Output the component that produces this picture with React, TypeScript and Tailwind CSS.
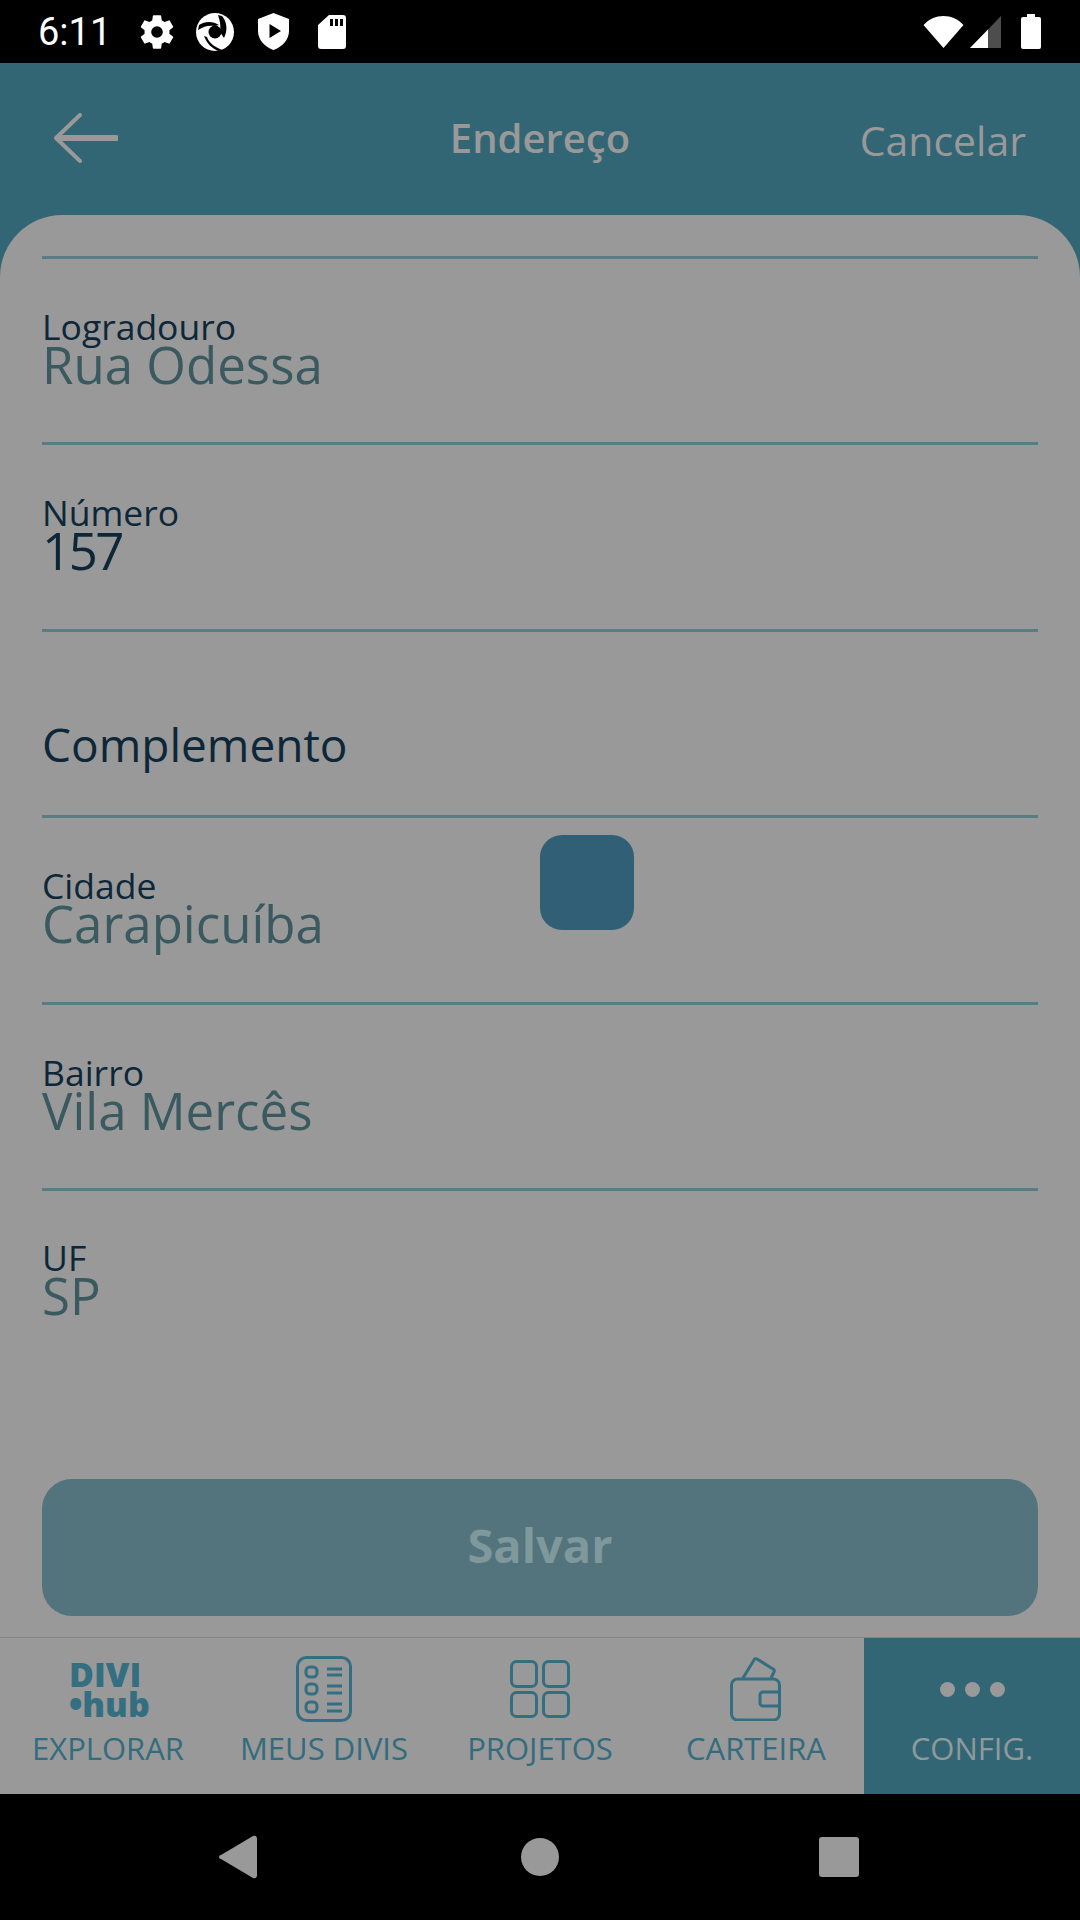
const fieldFont = "font-['Open_Sans',sans-serif]";

function Field({ label, value, dark }: { label?: string; value: string; dark?: boolean }) {
  return (
    <div className="h-[186.4px] shrink-0 border-b-[3px] border-[#5a7d83] flex flex-col pt-[49px]">
      {label ? (
        <>
          <div className="text-[35.5px] leading-[36px] text-[#0d2738]">{label}</div>
          <div className={`leading-[40px] ${dark ? 'text-[51px] font-medium tracking-[-2.5px] text-[#0d2738]' : 'text-[51px] font-medium text-[#3a5a60]'}`}>{value}</div>
        </>
      ) : (
        <div className="mt-[35px] text-[46px] leading-[56px] text-[#0d2738]">{value}</div>
      )}
    </div>
  );
}

function StatusBar() {
  return (
    <div className="h-[63px] bg-black flex items-center shrink-0 text-white pl-[38px] pr-[39px]">
      <span className="font-['Roboto',sans-serif] text-[38px] leading-none w-[99px]">6:11</span>
      <div className="flex items-center">
        <svg width="40" height="40" viewBox="0 0 24 24" fill="#fff">
          <path d="M19.4 13c.04-.32.1-.66.1-1s-.03-.68-.07-1l2.1-1.65c.2-.15.25-.42.12-.64l-2-3.46c-.12-.22-.39-.3-.61-.22l-2.49 1a7.3 7.3 0 0 0-1.69-.98l-.38-2.65A.49.49 0 0 0 14 2h-4c-.25 0-.46.18-.49.42l-.38 2.65c-.61.25-1.17.59-1.69.98l-2.49-1c-.23-.09-.49 0-.61.22l-2 3.46c-.13.22-.07.49.12.64L4.57 11c-.04.32-.07.66-.07 1s.03.68.07 1l-2.11 1.65c-.19.15-.25.42-.12.64l2 3.46c.12.22.39.3.61.22l2.49-1c.52.4 1.08.73 1.69.98l.38 2.65c.03.24.24.42.49.42h4c.25 0 .46-.18.49-.42l.38-2.65c.61-.25 1.17-.59 1.69-.98l2.49 1c.23.09.49 0 .61-.22l2-3.46c.12-.22.07-.49-.12-.64L19.4 13zM12 15.5a3.5 3.5 0 1 1 0-7 3.5 3.5 0 0 1 0 7z" />
        </svg>
        <svg className="ml-[18px]" width="40" height="40" viewBox="0 0 40 40">
          <circle cx="20" cy="20" r="19" fill="#fff" />
          <circle cx="20" cy="20" r="6.5" fill="#000" />
          <path d="M27 4 C32 10 33 18 29 26 L25 20 C26 14 25 9 23 3 Z" fill="#000" />
          <path d="M4 13 C10 9 18 9 24 13 L20 14 C14 13 9 14 3 18 Z" fill="#000" />
          <path d="M12 25 C14 31 20 35 27 38 L23 39 C17 36 12 32 9 24 Z" fill="#000" />
        </svg>
        <svg className="ml-[23px]" width="31" height="37" viewBox="0 0 31 37" fill="#fff">
          <path fillRule="evenodd" d="M15.5 0 L31 6 V18 C31 27 24 34 15.5 37 C7 34 0 27 0 18 V6 Z M11.5 11 V25 L23 18 Z" />
        </svg>
        <svg className="ml-[29px]" width="28" height="34" viewBox="0 0 28 34" fill="#fff">
          <path fillRule="evenodd" d="M11 0 H25 a3 3 0 0 1 3 3 V31 a3 3 0 0 1 -3 3 H3 a3 3 0 0 1 -3 -3 V10 Z M12 4 V11 H15 V4 Z M17 4 V11 H20 V4 Z M22 4 V11 H25 V4 Z" />
        </svg>
      </div>
      <div className="ml-auto flex items-center">
        <svg width="41" height="32" viewBox="0 0 41 32" fill="#fff">
          <path d="M20.5 32 L0.5 9 C6 3 13 0 20.5 0 C28 0 35 3 40.5 9 Z" />
        </svg>
        <svg className="ml-[6px]" width="31" height="32" viewBox="0 0 31 32">
          <path d="M31 0 V32 H0 Z" fill="#4d4d4d" />
          <path d="M18 13.5 V32 H0 Z" fill="#fff" />
        </svg>
        <svg className="ml-[20px]" width="20" height="35" viewBox="0 0 20 35" fill="#fff">
          <path d="M6 0 H14 V3 H18 a2 2 0 0 1 2 2 V33 a2 2 0 0 1 -2 2 H2 a2 2 0 0 1 -2 -2 V5 a2 2 0 0 1 2 -2 H6 Z" />
        </svg>
      </div>
    </div>
  );
}

function NavItem({ label, active, children }: { label: string; active?: boolean; children: React.ReactNode }) {
  return (
    <div className={`flex-1 flex flex-col items-center ${active ? 'bg-[#336675] text-[#8f9a9c]' : 'text-[#336c7e]'}`}>
      <div className="h-[90px] w-full flex items-center justify-center pt-[12px]">{children}</div>
      <div className="text-[31px] leading-[40px] whitespace-nowrap">{label}</div>
    </div>
  );
}

export default function App() {
  return (
    <div className={`w-[1080px] h-[1920px] flex flex-col overflow-hidden bg-black relative ${fieldFont}`}>
      <StatusBar />

      {/* Header */}
      <div className="h-[152px] bg-[#336675] shrink-0 flex items-start relative px-[54px] text-[#999999]">
        <svg className="mt-[50px]" width="64" height="50" viewBox="0 0 64 50" fill="none" stroke="#999999" strokeLinecap="round" strokeLinejoin="round">
          <path d="M62 25 H4" strokeWidth="6" />
          <path d="M26 2 L2 25 L26 48" strokeWidth="4" />
        </svg>
        <div className="absolute left-0 right-0 top-[50px] text-center text-[40px] leading-[50px] font-semibold">Endereço</div>
        <div className="ml-auto mt-[52px] text-[41px] leading-[50px] font-medium">Cancelar</div>
      </div>

      {/* Form card */}
      <div className="flex-1 bg-[#336675] flex flex-col">
        <div className="flex-1 bg-[#999999] rounded-t-[62px] px-[42px] flex flex-col">
          <div className="h-[44px] shrink-0 border-b-[3px] border-[#5a7d83]" />
          <Field label="Logradouro" value="Rua Odessa" />
          <Field label="Número" value="157" dark />
          <Field value="Complemento" />
          <Field label="Cidade" value="Carapicuíba" />
          <Field label="Bairro" value="Vila Mercês" />
          <div className="pt-[48px]">
            <div className="text-[35.5px] leading-[36px] text-[#0d2738]">UF</div>
            <div className="text-[51px] font-medium leading-[40px] text-[#3a5a60]">SP</div>
          </div>
          <div className="mt-auto mb-[21px] h-[137px] rounded-[30px] bg-[#53747c] flex items-center justify-center pb-[4px] text-[47px] font-bold text-[#7f989c]">
            Salvar
          </div>
        </div>
      </div>

      {/* Bottom nav */}
      <div className="h-[157px] shrink-0 bg-[#999999] border-t border-[#858585] flex">
        <NavItem label="EXPLORAR">
          <div className="flex flex-col font-extrabold text-[#336f80] w-[78px]">
            <span className="text-[34px] leading-[30px]">DIVI</span>
            <span className="text-[34px] leading-[30px] whitespace-nowrap">•hub</span>
          </div>
        </NavItem>
        <NavItem label="MEUS DIVIS">
          <svg width="56" height="66" viewBox="0 0 56 66" fill="none" stroke="#336f80" strokeWidth="3">
            <rect x="1.5" y="1.5" width="53" height="63" rx="9" />
            <rect x="10" y="11" width="11" height="10" rx="4" />
            <rect x="10" y="28" width="11" height="10" rx="4" />
            <rect x="10" y="46" width="11" height="10" rx="4" />
            <path d="M31 13 H46 M31 19 H46 M31 30 H46 M31 37 H46 M31 48 H46 M31 55 H46" />
          </svg>
        </NavItem>
        <NavItem label="PROJETOS">
          <svg width="60" height="58" viewBox="0 0 60 58" fill="none" stroke="#336f80" strokeWidth="3">
            <rect x="1.5" y="1.5" width="25" height="25" rx="5" />
            <rect x="33.5" y="1.5" width="25" height="25" rx="5" />
            <rect x="1.5" y="32.5" width="25" height="24" rx="5" />
            <rect x="33.5" y="32.5" width="25" height="24" rx="5" />
          </svg>
        </NavItem>
        <NavItem label="CARTEIRA">
          <svg width="52" height="64" viewBox="0 0 52 64" fill="none" stroke="#336f80" strokeWidth="3" strokeLinejoin="round">
            <rect x="1.5" y="22" width="48" height="41" rx="6" />
            <path d="M13 21 L24 3 a2 2 0 0 1 3 -1 L43 12 a2 2 0 0 1 1 3 L41 21" />
            <path d="M50 35 H33 a3 3 0 0 0 -3 3 V46 a3 3 0 0 0 3 3 H50" />
          </svg>
        </NavItem>
        <NavItem label="CONFIG." active>
          <div className="flex gap-[10px]">
            <span className="w-[15px] h-[15px] rounded-full bg-[#999999]" />
            <span className="w-[15px] h-[15px] rounded-full bg-[#999999]" />
            <span className="w-[15px] h-[15px] rounded-full bg-[#999999]" />
          </div>
        </NavItem>
      </div>

      {/* Android nav */}
      <div className="h-[126px] shrink-0 bg-black flex items-center">
        <svg className="ml-[219px]" width="39" height="44" viewBox="0 0 39 44" fill="#999999">
          <path d="M2 20 L34 1 a3 3 0 0 1 4 2 V41 a3 3 0 0 1 -4 2 L2 24 a2 2 0 0 1 0 -4 Z" />
        </svg>
        <span className="ml-[263px] w-[38px] h-[38px] rounded-full bg-[#999999]" />
        <span className="ml-[260px] w-[40px] h-[40px] rounded-[3px] bg-[#999999]" />
      </div>

      {/* Loading square on top of the dimmed page */}
      <div className="absolute left-[540px] top-[835px] w-[94px] h-[95px] rounded-[22px] bg-[#305f76]" />
    </div>
  );
}
